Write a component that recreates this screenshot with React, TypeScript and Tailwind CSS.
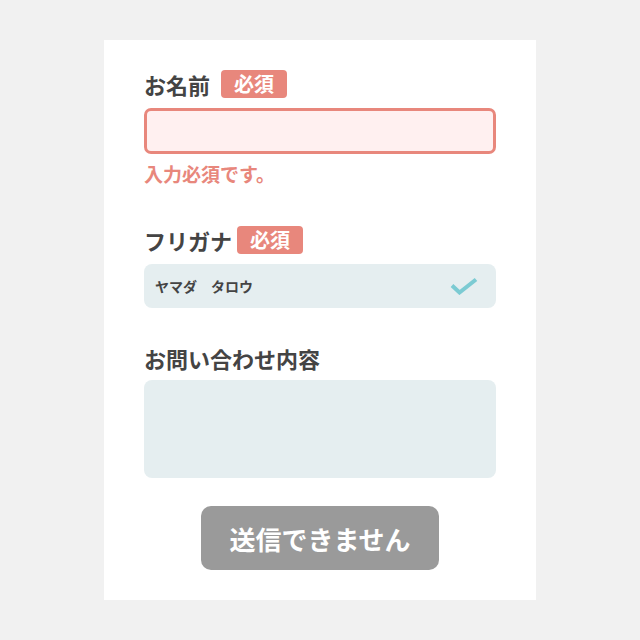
const font = "font-['Noto_Sans_CJK_JP','Noto_Sans',sans-serif]";

function Badge() {
  return (
    <span className="inline-flex h-[28px] w-[66px] items-center justify-center rounded-[4px] bg-[#e8877c] text-[20px] font-bold leading-none text-white">
      必須
    </span>
  );
}

export default function App() {
  return (
    <div className={`${font} flex min-h-[640px] w-full justify-center bg-[#f1f1f1] pt-[40px]`}>
      <div className="flex h-[560px] w-[432px] flex-col bg-white px-[40px] pt-[30px]">
        {/* お名前 */}
        <div className="flex items-center gap-[11px]">
          <span className="text-[22px] font-bold leading-[28px] text-[#444]">お名前</span>
          <Badge />
        </div>
        <div className="mt-[10px] h-[46px] w-full rounded-[7px] border-[3px] border-[#e8877c] bg-[#fff0f0]" />
        <p className="mt-[7px] text-[19px] font-bold leading-[26px] text-[#e8877c]">入力必須です。</p>

        {/* フリガナ */}
        <div className="mt-[39px] flex items-center gap-[5px]">
          <span className="text-[22px] font-bold leading-[28px] text-[#444]">フリガナ</span>
          <Badge />
        </div>
        <div className="mt-[10px] flex h-[44px] w-full items-center justify-between rounded-[8px] bg-[#e5eef0] pl-[11px] pr-[18px]">
          <span className="text-[14px] font-bold text-[#444]">ヤマダ　タロウ</span>
          <svg width="28" height="18" viewBox="0 0 28 18" fill="none">
            <path d="M2 8.5 L9.5 15.5 L26 2.5" stroke="#7ccbd3" strokeWidth="4" />
          </svg>
        </div>

        {/* お問い合わせ内容 */}
        <span className="mt-[36px] text-[22px] font-bold leading-[28px] text-[#444]">お問い合わせ内容</span>
        <div className="mt-[8px] h-[98px] w-full rounded-[8px] bg-[#e5eef0]" />

        <div className="mt-[28px] flex justify-center">
          <button className="h-[64px] w-[238px] rounded-[10px] bg-[#9a9a9a] text-[26px] font-bold text-white">
            送信できません
          </button>
        </div>
      </div>
    </div>
  );
}
